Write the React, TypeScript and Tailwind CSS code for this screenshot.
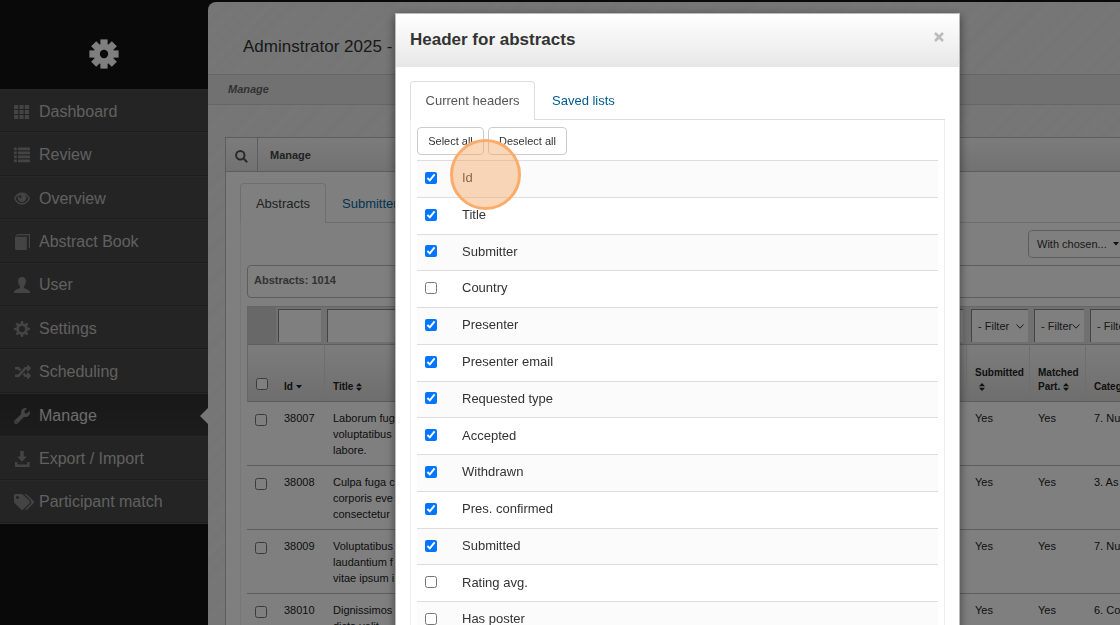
import type { ReactNode } from 'react'
import { FaRandom, FaTags, FaWrench } from 'react-icons/fa'

const gearTeeth = [0, 45, 90, 135]

function GearLogo() {
  return (
    <svg viewBox="-15 -15 30 30" className="size-[30px] fill-white" aria-hidden="true">
      <mask id="logo-hole">
        <rect x="-15" y="-15" width="30" height="30" fill="white" />
        <circle r="4.2" fill="black" />
      </mask>
      <g mask="url(#logo-hole)">
        <circle r="10.3" />
        {gearTeeth.map((angle) => (
          <rect key={angle} x="-3.6" y="-14.6" width="7.2" height="29.2" transform={`rotate(${angle})`} />
        ))}
      </g>
    </svg>
  )
}

function Glyph({ children }: { children: ReactNode }) {
  return (
    <svg viewBox="0 0 16 16" className="size-4 fill-current" aria-hidden="true">
      {children}
    </svg>
  )
}

const GridIcon = () => (
  <Glyph>
    {[1, 6, 11].map((y) => [0, 5.4, 10.8].map((x) => <rect key={`${x}-${y}`} x={x} y={y} width="4.2" height="4" rx=".5" />))}
  </Glyph>
)

const ListIcon = () => (
  <Glyph>
    {[0.5, 4.5, 8.5, 12.5].map((y) => (
      <g key={y}>
        <rect y={y} width="2.8" height="2.8" rx=".5" />
        <rect x="4" y={y} width="12" height="2.8" rx=".5" />
      </g>
    ))}
  </Glyph>
)

const EyeIcon = () => (
  <Glyph>
    <path
      d="M.8 7.500C2.300 4 5 2.200 8 2.200S13.700 4 15.200 7.500C13.700 11 11 12.800 8 12.800S2.300 11 .8 7.500z"
      fill="none"
      stroke="currentColor"
      strokeWidth="1.500"
    />
    <path
      fillRule="evenodd"
      d="M8 2.500a4.300 4.300 0 1 1 0 8.600 4.300 4.300 0 0 1 0-8.600zM6.800 4.200a1.900 1.900 0 0 0-1.500 2.600c.8.700 1.900.3 2.200-.6.200-.8 0-1.600-.7-2z"
    />
  </Glyph>
)

const BookIcon = () => (
  <Glyph>
    <path d="M1 2.800h11.800V16H2a1 1 0 0 1-1-1z" />
    <path d="M1.500 2 3.500 0H16v14h-1.200V1.300H4l-.8.7z" />
  </Glyph>
)

const UserIcon = () => (
  <Glyph>
    <path d="M8 0c2.500 0 4 1.700 4 4.200 0 1.900-.8 4-2 5v1.500c.4.900 5.300 1.600 6 4.300V16H0v-1c.7-2.700 5.600-3.400 6-4.300V9.200c-1.200-1-2-3.100-2-5C4 1.700 5.500 0 8 0z" />
  </Glyph>
)

const CogIcon = () => (
  <Glyph>
    <g transform="translate(8 8)">
      <circle r="4.500" fill="none" stroke="currentColor" strokeWidth="2.800" />
      {[0, 45, 90, 135, 180, 225, 270, 315].map((angle) => (
        <path key={angle} d="M-1.500-5.200-1-8h2l.5 2.800z" transform={`rotate(${angle})`} />
      ))}
    </g>
  </Glyph>
)

const DownloadIcon = () => (
  <Glyph>
    <path d="M6.200 0h3.600v5.500h3L8 10.800 3.200 5.500h3zM1 11h2.400v2.400h9.800V11h2.400v5H1z" />
  </Glyph>
)

const navItems = [
  { name: 'Dashboard', icon: <GridIcon /> },
  { name: 'Review', icon: <ListIcon /> },
  { name: 'Overview', icon: <EyeIcon /> },
  { name: 'Abstract Book', icon: <BookIcon /> },
  { name: 'User', icon: <UserIcon /> },
  { name: 'Settings', icon: <CogIcon /> },
  { name: 'Scheduling', icon: <FaRandom className="h-4 w-[18px]" /> },
  { name: 'Manage', icon: <FaWrench className="size-4" />, active: true },
  { name: 'Export / Import', icon: <DownloadIcon /> },
  { name: 'Participant match', icon: <FaTags className="h-5 w-5" /> },
]

const abstracts = [
  { id: '38007', title: ['Laborum fug', 'voluptatibus', 'labore.'], category: '7. Nu' },
  { id: '38008', title: ['Culpa fuga c', 'corporis eve', 'consectetur'], category: '3. As' },
  { id: '38009', title: ['Voluptatibus', 'laudantium f', 'vitae ipsum i'], category: '7. Nu' },
  { id: '38010', title: ['Dignissimos', 'dicta velit', 'quia.'], category: '6. Co' },
]

const headers = [
  { name: 'Id', checked: true },
  { name: 'Title', checked: true },
  { name: 'Submitter', checked: true },
  { name: 'Country', checked: false },
  { name: 'Presenter', checked: true },
  { name: 'Presenter email', checked: true },
  { name: 'Requested type', checked: true },
  { name: 'Accepted', checked: true },
  { name: 'Withdrawn', checked: true },
  { name: 'Pres. confirmed', checked: true },
  { name: 'Submitted', checked: true },
  { name: 'Rating avg.', checked: false },
  { name: 'Has poster', checked: false },
]

function Sidebar() {
  return (
    <aside className="w-52 shrink-0 bg-[#131313]">
      <div className="flex h-[89px] items-center justify-center pt-[18px]">
        <GearLogo />
      </div>
      <nav>
        <ul className="flex h-[435px] flex-col border-b border-[#555]">
          {navItems.map((item) => (
            <li key={item.name} className="flex-1">
              <a
                href="#"
                className={`relative flex h-full items-center border-t border-b border-t-[#4f4f4f] border-b-[#3a3a3a] pt-0.5 pl-3.5 text-base ${
                  item.active
                    ? 'bg-gradient-to-b from-[#303030] to-[#393939] text-[#d8d8d8]'
                    : 'bg-[#484848] text-[#c0c0c0]'
                }`}
              >
                <span className="flex w-[25px] shrink-0 text-[#888]">{item.icon}</span>
                {item.name}
                {item.active && (
                  <svg viewBox="0 0 8 16" className="absolute right-0 h-4 w-2 fill-[#eee]" aria-hidden="true">
                    <path d="M8 0v16L0 8z" />
                  </svg>
                )}
              </a>
            </li>
          ))}
        </ul>
      </nav>
    </aside>
  )
}

function SortIcon() {
  return (
    <svg viewBox="0 0 6 8" className="inline h-2 w-1.5 fill-[#222]" aria-hidden="true">
      <path d="M0 3.300 3 0l3 3.300zM0 4.700 3 8l3-3.300z" />
    </svg>
  )
}

function Caret() {
  return (
    <svg viewBox="0 0 6 4" className="inline h-1 w-1.5 shrink-0 fill-[#222]" aria-hidden="true">
      <path d="M0 0h6L3 3.600z" />
    </svg>
  )
}

function FilterSelect({ label }: { label: string }) {
  return (
    <div className="flex h-[33px] items-center overflow-hidden border-t border-l border-[#888] bg-white pr-1 pl-1.5">
      <select aria-label={label} className="min-w-0 flex-1 appearance-none overflow-hidden text-[11px] text-[#333]">
        <option>- Filter</option>
      </select>
      <svg viewBox="0 0 8 5" className="h-[5px] w-2 shrink-0 fill-none stroke-[#333]" aria-hidden="true">
        <path d="M.5.5 4 4.200 7.500.5" />
      </svg>
    </div>
  )
}

function TextFilter({ label }: { label: string }) {
  return <input type="text" aria-label={label} className="block h-[33px] w-full border-t border-l border-[#888] bg-white" />
}

function AbstractsTable() {
  const head = 'border-r border-[#ddd] pb-[7px] pl-2 text-left align-bottom font-bold'
  const cell = 'px-2 pt-2 pb-[7px] align-top'

  return (
    <table className="w-full table-fixed border-separate border-spacing-0 text-[11px] leading-4 text-[#222]">
      <colgroup>
        <col className="w-[29px]" />
        <col className="w-[49px]" />
        <col className="w-[200px]" />
        <col className="w-[442px]" />
        <col className="w-[63px]" />
        <col className="w-[56px]" />
        <col />
      </colgroup>
      <thead>
        <tr className="h-[38px] bg-[#e0e0e0]">
          <td className="border-t border-l border-[#ccc] bg-[#d0d0d0]" />
          <td className="border-t border-[#ccc] pr-1 pl-[2px]"><TextFilter label="Filter id" /></td>
          <td className="border-t border-[#ccc] pr-1 pl-[2px]"><TextFilter label="Filter title" /></td>
          <td className="border-t border-[#ccc] pr-1 pl-[2px]"><FilterSelect label="Filter accepted" /></td>
          <td className="border-t border-[#ccc] pr-[2px] pl-1"><FilterSelect label="Filter submitted" /></td>
          <td className="border-t border-[#ccc] pr-[2px] pl-1"><FilterSelect label="Filter matched" /></td>
          <td className="border-t border-[#ccc] pl-1"><FilterSelect label="Filter category" /></td>
        </tr>
        <tr className="h-[58px] bg-gradient-to-b from-[#fafafa] to-[#dcdcdc] text-[10px] leading-[14px] [&>th]:border-y [&>th]:border-y-[#bbb]">
          <th className="border-l border-[#ccc] px-2 pb-[11px] text-left align-bottom">
            <input type="checkbox" aria-label="Select all abstracts" className="block size-3" />
          </th>
          <th className={head}>Id <Caret /></th>
          <th className={head}>Title <SortIcon /></th>
          <th className={head}>Accepted</th>
          <th className={head}>
            Submitted
            <span className="block pl-1"><SortIcon /></span>
          </th>
          <th className={head}>Matched Part. <SortIcon /></th>
          <th className={`${head} whitespace-nowrap`}>Category</th>
        </tr>
      </thead>
      <tbody className="[&_td]:border-b [&_td]:border-[#bbb]">
        {abstracts.map((row) => (
          <tr key={row.id}>
            <td className="px-2 pt-3 align-top">
              <input type="checkbox" aria-label={`Select ${row.id}`} className="block size-3" />
            </td>
            <td className={cell}>{row.id}</td>
            <td className={cell}>
              {row.title.map((line) => (
                <span key={line} className="block">{line}</span>
              ))}
            </td>
            <td />
            <td className={cell}>Yes</td>
            <td className={cell}>Yes</td>
            <td className={`${cell} whitespace-nowrap`}>{row.category}</td>
          </tr>
        ))}
      </tbody>
    </table>
  )
}

function Content() {
  return (
    <main className="mt-[2px] min-w-0 flex-1 overflow-hidden rounded-tl-lg bg-[#eee] bg-[repeating-linear-gradient(135deg,#eeeeee_0px,#ebebeb_5px,#ededed_9px,#eaeaea_16px,#eeeeee_23px)]">
      <header className="flex h-[72px] items-center pt-[18px] pl-[35px]">
        <h1 className="text-[17px] text-[#333]">Adminstrator 2025 -</h1>
      </header>
      <div className="flex h-[31px] items-center border-y border-[#ccc] bg-[#e3e3e3] pl-5">
        <span className="text-[11px] font-bold text-[#666] italic">Manage</span>
      </div>

      <section className="mt-8 ml-[17px] w-max border border-[#bbb] bg-white">
        <div className="flex h-[34px] border-b border-[#bbb] bg-gradient-to-b from-[#f8f8f8] to-[#e4e4e4]">
          <span className="flex w-8 items-center justify-center border-r border-[#bbb] pt-1">
            <svg viewBox="0 0 13 13" className="size-[13px] fill-none stroke-[#555] stroke-2" aria-hidden="true">
              <circle cx="5.300" cy="5.300" r="4.200" />
              <path d="m8.500 8.500 3.700 3.700" />
            </svg>
          </span>
          <h2 className="flex items-center pt-0.5 pl-3 text-[11px] font-bold text-[#444]">Manage</h2>
        </div>

        <div className="pt-[11px] pl-3.5">
          <div className="flex border-b border-[#ddd]">
            <button className="-mb-px h-10 w-[86px] rounded-t border border-b-0 border-[#ddd] bg-white text-[13px] text-[#444]">
              Abstracts
            </button>
            <button className="px-4 pt-0.5 text-[13px] text-[#0069a6]">Submitters</button>
          </div>
          <div className="border-l border-[#eee] pl-1.5">
            <div className="w-[886px]">
              <div className="flex justify-end py-[7px]">
                <button className="flex h-7 w-[105px] items-center gap-1.5 rounded-sm border border-[#bbb] pl-2 text-[11px] whitespace-nowrap text-[#333]">
                  With chosen... <Caret />
                </button>
              </div>
              <div className="flex h-[33px] items-center rounded-sm border border-[#bbb] px-1.5 pb-0.5 text-[11px] font-bold text-[#666]">
                Abstracts: 1014
              </div>
              <div className="pt-2">
                <AbstractsTable />
              </div>
            </div>
          </div>
        </div>
      </section>
    </main>
  )
}

function HeadersModal() {
  return (
    <div
      role="dialog"
      aria-labelledby="modal-title"
      className="relative h-max w-[565px] border border-[#bbb] bg-white shadow-[0_3px_9px_rgba(0,0,0,0.5)]"
    >
      <div className="flex h-[53px] items-center justify-between border-b border-[#e5e5e5] bg-gradient-to-b from-white to-[#e8e8e8] pr-3.5 pl-3.5">
        <h2 id="modal-title" className="text-[17px] font-bold text-[#333]">Header for abstracts</h2>
        <button aria-label="Close" className="flex h-4 w-3 items-start justify-center">
          <svg viewBox="0 0 10 10" className="size-2.5 stroke-[#bbb] stroke-[2.5]" aria-hidden="true">
            <path d="m1 1 8 8M9 1 1 9" />
          </svg>
        </button>
      </div>

      <div className="px-3.5 pt-3.5">
        <div className="flex border-b border-[#ddd] text-[13px]">
          <button className="-mb-px h-[39px] w-[125px] rounded-t border border-b-0 border-[#ddd] bg-white text-[#555]">
            Current headers
          </button>
          <button className="px-[17px] pt-0.5 text-[#005a8c]">Saved lists</button>
        </div>

        <div className="border-x border-[#eee] px-1.5 pt-[7px]">
          <div className="flex gap-1 text-[11px] text-[#333]">
            <button className="h-7 w-[67px] rounded-sm border border-[#ccc] bg-white">Select all</button>
            <button className="h-7 w-[79px] rounded-sm border border-[#ccc] bg-white">Deselect all</button>
          </div>
          <ul className="mt-[5px] grid h-[478px] auto-rows-fr text-[13px] text-[#333]">
            {headers.map((header) => (
              <li key={header.name} className="border-t border-[#ddd] odd:bg-[#fbfbfb]">
                <label className="flex h-full items-center gap-[25px] pb-0.5 pl-2">
                  <input type="checkbox" defaultChecked={header.checked} className="size-3 shrink-0" />
                  {header.name}
                </label>
              </li>
            ))}
          </ul>
        </div>
      </div>

      {/* Click marker */}
      <div className="pointer-events-none absolute top-[125px] left-[54px] size-[71px] rounded-full border-[3px] border-[#fbac6a] bg-[#f7a766]/45" />
    </div>
  )
}

export default function App() {
  return (
    <div className="h-screen overflow-hidden bg-[#131313] font-['Liberation_Sans',Arial,sans-serif]">
      <div className="flex h-full">
        <Sidebar />
        <Content />
      </div>
      <div className="fixed inset-0 flex justify-center overflow-hidden bg-black/50 pt-[13px] pl-[235px]">
        <HeadersModal />
      </div>
    </div>
  )
}
